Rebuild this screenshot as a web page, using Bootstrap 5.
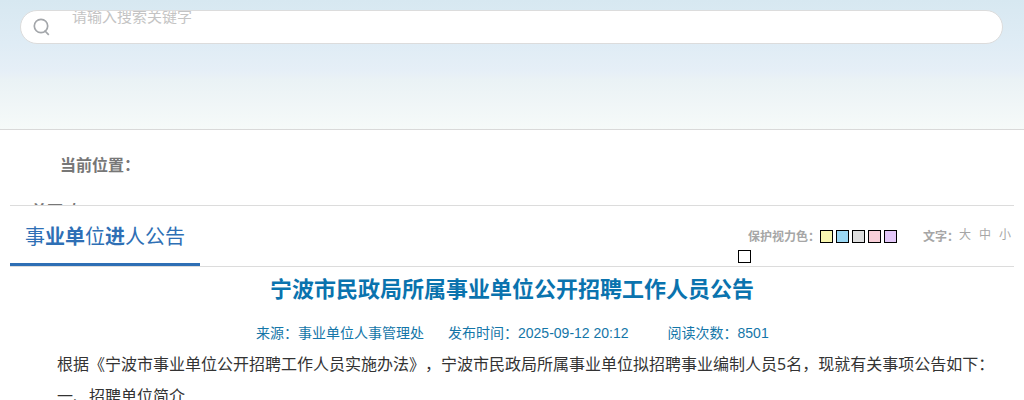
<!DOCTYPE html>
<html lang="zh-CN">
<head>
    <meta charset="UTF-8">
    <meta name="viewport" content="width=device-width, initial-scale=1.0">
    <title>宁波市民政局所属事业单位公开招聘工作人员公告</title>
    <link href="https://cdn.jsdelivr.net/npm/bootstrap@5.3.0/dist/css/bootstrap.min.css" rel="stylesheet">
    <style>
        body {
            font-family: "Liberation Sans", "Noto Sans CJK SC", sans-serif;
            font-size: 16px;
            color: #333;
            background: #fff;
            height: 400px;
            overflow: hidden;
            text-spacing-trim: space-all;
        }
        .top-banner {
            height: 130px;
            padding: 10px 21px 0 20px;
            background: linear-gradient(#d7e8f1 0, #dfecf5 43px, #e6eff7 72px, #eaf2f5 80px, #f6faf9 129px);
            border-bottom: 1px solid #d9d9d9;
        }
        .search-box {
            height: 34px;
            padding-left: 12px;
            border: 1px solid #dcdcdc;
            border-radius: 17px;
            background: #fff;
            overflow: hidden;
        }
        .search-box svg {
            margin-top: 7px;
        }
        .search-hint {
            margin: -4px 0 0 21px;
            font-size: 15px;
            line-height: 20px;
            color: #c4c4c4;
        }
        .crumbs {
            height: 75px;
            overflow: hidden;
            font-weight: bold;
            color: #777;
        }
        .crumbs-label {
            padding: 24px 0 0 60px;
            line-height: 24px;
        }
        .crumbs-path {
            padding: 22px 0 0 31px;
            line-height: 24px;
        }
        .crumbs-path span {
            margin-left: 8px;
            line-height: 20px;
        }
        .column-bar {
            height: 62px;
            margin: 0 10px;
            border-top: 1px solid #dcdcdc;
            border-bottom: 1px solid #dcdcdc;
        }
        .column-name {
            width: 190px;
            height: 60px;
            border-bottom: 3px solid #2e6fb5;
            padding-left: 15px;
            font-size: 20px;
            line-height: 62px;
            color: #2e6fb5;
        }
        .view-tools {
            width: 276px;
            padding: 20px 3px 0 0;
            font-size: 12px;
            line-height: 20px;
            color: #a6a6a6;
        }
        .view-tools b {
            padding-top: 1px;
        }
        .swatch {
            width: 13px;
            height: 13px;
            border: 1px solid #000;
        }
        .article-title {
            margin: 5px 0 0;
            font-size: 22px;
            font-weight: bold;
            line-height: 36px;
            color: #0a73ae;
        }
        .article-meta {
            margin-top: 15px;
            padding-left: 256px;
            font-size: 14px;
            line-height: 20px;
            color: #1476a8;
        }
        .article-text {
            padding: 5px 0 0 57px;
            font-family: "Noto Sans", "Noto Sans CJK SC", sans-serif;
            line-height: 32px;
        }
    </style>
</head>
<body>
    <header class="top-banner">
        <div class="search-box d-flex align-items-start">
            <svg width="18" height="18" viewBox="0 0 18 18" fill="none" stroke="#a3a6aa" stroke-width="1.7">
                <circle cx="8" cy="8" r="6.7"/>
                <path d="M11.5 12.5l4.3 4.3"/>
            </svg>
            <div class="search-hint">请输入搜索关键字</div>
        </div>
    </header>

    <nav class="crumbs">
        <div class="crumbs-label">当前位置：</div>
        <div class="crumbs-path d-flex">首页<span>/</span></div>
    </nav>

    <div class="column-bar d-flex justify-content-between">
        <div class="column-name text-nowrap">事<b>业单</b>位<b>进</b>人公告</div>
        <div class="view-tools">
            <div class="d-flex text-nowrap">
                <b class="ms-auto">保护视力色：</b>
                <div class="d-flex align-items-center" style="gap: 3px">
                    <span class="swatch" style="background: #f9f7b0"></span>
                    <span class="swatch" style="background: #9bd8f4"></span>
                    <span class="swatch" style="background: #dedede"></span>
                    <span class="swatch" style="background: #f8cfd8"></span>
                    <span class="swatch" style="background: #e3c7f8"></span>
                </div>
                <b style="margin-left: 26px">文字：</b>
                <span class="d-flex gap-2" style="line-height: 18px">
                    <span>大</span>
                    <span>中</span>
                    <span>小</span>
                </span>
            </div>
            <div class="swatch bg-white" style="margin-top: 3px"></div>
        </div>
    </div>

    <main>
        <h1 class="article-title text-center">宁波市民政局所属事业单位公开招聘工作人员公告</h1>
        <div class="article-meta d-flex text-nowrap">
            <span>来源：事业单位人事管理处</span>
            <span style="margin-left: 24px">发布时间：2025-09-12 20:12</span>
            <span style="margin-left: 39px">阅读次数：8501</span>
        </div>
        <div class="article-text text-nowrap">
            <div>根据《宁波市事业单位公开招聘工作人员实施办法》，宁波市民政局所属事业单位拟招聘事业编制人员5名，现就有关事项公告如下：</div>
            <div>一、招聘单位简介</div>
        </div>
    </main>

    <script src="https://cdn.jsdelivr.net/npm/bootstrap@5.3.0/dist/js/bootstrap.bundle.min.js"></script>
</body>
</html>
